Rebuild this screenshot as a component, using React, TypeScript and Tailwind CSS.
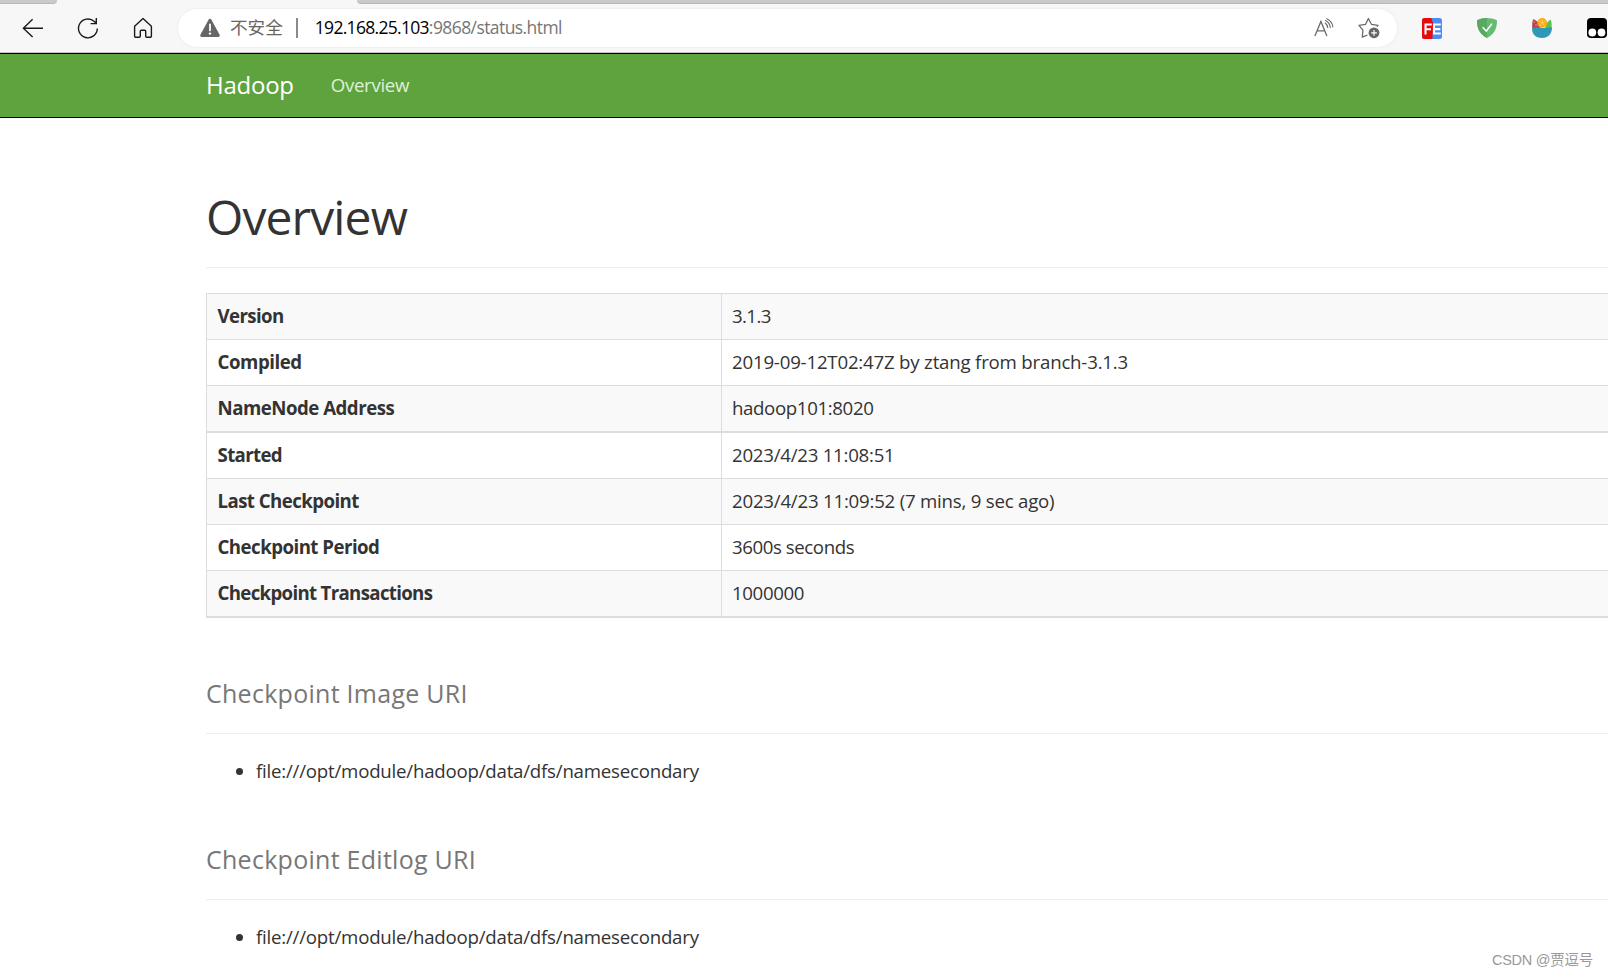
interface Row {
  label: string;
  value: string;
  labelClass: string;
  valueClass: string;
}

const rows: Row[] = [
  { label: 'Version', value: '3.1.3', labelClass: 'tracking-[-0.6px]', valueClass: 'tracking-[-0.6px]' },
  { label: 'Compiled', value: '2019-09-12T02:47Z by ztang from branch-3.1.3', labelClass: 'tracking-[-0.45px]', valueClass: 'tracking-[-0.2px]' },
  { label: 'NameNode Address', value: 'hadoop101:8020', labelClass: 'tracking-[-0.5px]', valueClass: 'tracking-[-0.37px]' },
  { label: 'Started', value: '2023/4/23 11:08:51', labelClass: 'tracking-[-0.65px]', valueClass: 'tracking-[-0.25px]' },
  { label: 'Last Checkpoint', value: '2023/4/23 11:09:52 (7 mins, 9 sec ago)', labelClass: 'tracking-[-0.57px]', valueClass: 'tracking-[-0.22px]' },
  { label: 'Checkpoint Period', value: '3600s seconds', labelClass: 'tracking-[-0.53px]', valueClass: 'tracking-[-0.43px]' },
  { label: 'Checkpoint Transactions', value: '1000000', labelClass: 'tracking-[-0.68px]', valueClass: 'tracking-[-0.37px]' },
];

function BackIcon() {
  return (
    <svg width="22" height="22" viewBox="0 0 22 22" fill="none" stroke="#1b1b1b" strokeWidth="1.4">
      <path d="M21 11.3H1.4M10.6 2.2 1.4 11.3l9.2 8.8" />
    </svg>
  );
}

function ReloadIcon() {
  return (
    <svg width="22" height="22" viewBox="0 0 22 22" fill="none" stroke="#1b1b1b" strokeWidth="1.4">
      <path d="M20.3 11.5A9.4 9.4 0 1 1 17.4 4.6L19.3 6.4M19.3 1V6.6H13.6" />
    </svg>
  );
}

function HomeIcon() {
  return (
    <svg width="22" height="22" viewBox="0 0 22 22" fill="none" stroke="#1b1b1b" strokeWidth="1.4" strokeLinejoin="round">
      <path d="M2.6 9.2 11 1.6l8.4 7.6v9.9a1.2 1.2 0 0 1-1.2 1.2h-3.500a1 1 0 0 1-1-1v-5.100a1 1 0 0 0-1-1H9.300a1 1 0 0 0-1 1v5.100a1 1 0 0 1-1 1H3.800a1.200 1.200 0 0 1-1.200-1.200z" />
    </svg>
  );
}

function WarningIcon() {
  return (
    <svg width="22" height="20" viewBox="0 0 22 20">
      <path d="M9.7 1.4a1.5 1.5 0 0 1 2.600 0l8.300 15.300a1.500 1.500 0 0 1-1.300 2.200H2.700a1.500 1.500 0 0 1-1.300-2.200z" fill="#666" />
      <path d="M11 6.4v6" stroke="#fff" strokeWidth="1.8" strokeLinecap="round" />
      <circle cx="11" cy="15.6" r="1.2" fill="#fff" />
    </svg>
  );
}

function ReadAloudIcon() {
  return (
    <svg width="20" height="20" viewBox="0 0 20 20" fill="none" stroke="#6a6a6a" strokeWidth="1.3">
      <path d="M.9 18 6.9 3.500 12.900 18M3 12.800h7.800" />
      <path d="M10.900 4.700Q13.600 6.600 13.800 10M11.200 2.300Q15.900 4.700 16.400 10M12.500.6Q18.300 3.500 19 9.400" strokeWidth="1.1" />
    </svg>
  );
}

function FavoriteIcon() {
  return (
    <svg width="22" height="22" viewBox="0 0 22 22" fill="none" stroke="#6a6a6a" strokeWidth="1.3" strokeLinejoin="round">
      <path d="M9.500 18 4.300 20.200 4.900 13.200 1 8.300 7.600 7.300 10.400 1.500 13.400 7.300 20 8.300 18.800 9.600" />
      <circle cx="16" cy="15.8" r="5.4" fill="#666" stroke="none" />
      <path d="M16 12.900v5.800M13.100 15.800h5.800" stroke="#fff" strokeWidth="1.2" />
    </svg>
  );
}

function FeIcon() {
  return (
    <svg width="20" height="21" viewBox="0 0 20 21">
      <rect width="20" height="21" rx="2.5" fill="#4a8df6" />
      <path d="M2.500 0H9.300L11.300 6 10.300 21H2.500A2.500 2.500 0 0 1 0 18.500v-16A2.500 2.500 0 0 1 2.500 0z" fill="#ea0a0a" />
      <path d="M3.500 16.500V6.500H9.800M3.500 11.300H9M18.800 6.500H12V15.500H18.800M12 11.100H18.300" fill="none" stroke="#fff" strokeWidth="2.1" />
    </svg>
  );
}

function ShieldIcon() {
  return (
    <svg width="20" height="20" viewBox="0 0 20 20">
      <path d="M10 0C7 0 3 .8 0 2.200 0 9 1.500 15.500 10 20 18.500 15.500 20 9 20 2.200 17 .8 13 0 10 0z" fill="#68bc71" />
      <path d="M10 0C7 0 3 .8 0 2.200 0 9 1.500 15.500 10 20z" fill="#5aa862" />
      <path d="M5.600 9.300 9.300 13 15 5.600" fill="none" stroke="#fff" strokeWidth="1.5" />
    </svg>
  );
}

function SaladIcon() {
  return (
    <svg width="20" height="20" viewBox="0 0 20 20">
      <path d="M.3 10.500C0 6 .2 3 1.300 1.300 4 2 8 5 8.500 10.500z" fill="#b8444b" />
      <path d="M19.600 10.500c.3-4 0-7-1-9C16 3 13.500 6 13.500 10.500z" fill="#5cc24e" />
      <circle cx="10.200" cy="4.900" r="4.900" fill="#f9a91c" />
      <path d="M10.200 4.900V1.200M10.200 4.900 13.600 3.400M10.200 4.900 7 3.400M10.200 4.900 13 8M10.200 4.900 7.700 8" stroke="#fdd35c" strokeWidth=".9" />
      <circle cx="2.200" cy="4" r=".7" fill="#f0a0a0" />
      <circle cx="4" cy="7" r=".8" fill="#f0a0a0" />
      <path d="M0 10.200C4 9 6 9.200 7.500 9.700 11 10.600 14 9 20 9.600 20 16 16.500 20 10 20S0 16 0 10.200z" fill="#2f97b7" />
    </svg>
  );
}

function TampermonkeyIcon() {
  return (
    <svg width="20" height="20" viewBox="0 0 20 20">
      <rect width="20" height="20" rx="4" fill="#000" />
      <circle cx="5.3" cy="14.500" r="3.9" fill="#fff" />
      <circle cx="14.500" cy="14.500" r="3.9" fill="#fff" />
    </svg>
  );
}

function BrowserBar() {
  return (
    <div className="h-[53px] shrink-0 bg-[#f7f7f7] border-b border-[#c4c4c4]">
      {/* bottom edge of the tab strip, the gap is the active tab */}
      <div className="flex h-1 justify-between">
        <div className="w-[57px] rounded-br-md border-b border-[#b8b8b8] bg-[#cacaca]" />
        <div className="w-[1251px] rounded-bl-md border-b border-[#b8b8b8] bg-[#cacaca]" />
      </div>
      <div className="flex h-[48px] items-center">
        <div className="flex w-[178px] shrink-0 gap-[33px] pl-[22px]">
          <BackIcon />
          <ReloadIcon />
          <HomeIcon />
        </div>
        <div className="flex h-[38px] w-[1219px] shrink-0 items-center rounded-full bg-white pl-[21px] pr-[17px] shadow-[0_0_3px_rgba(0,0,0,0.08)]">
          <WarningIcon />
          <span className="ml-[9px] pb-[2px] font-['Noto_Sans_CJK_SC',sans-serif] text-[17.6px] leading-none text-[#666]">不安全</span>
          <span className="ml-[13px] h-5 w-[2px] bg-[#8a8a8a]" />
          <span className="ml-[17px] pb-[1px] text-[17.5px] leading-none tracking-[-0.58px] text-[#767676]">
            <span className="tracking-[-0.7px] text-black">192.168.25.103</span>:9868/status.html
          </span>
          <span className="ml-auto flex items-center gap-[24px] pb-px">
            <ReadAloudIcon />
            <FavoriteIcon />
          </span>
        </div>
        <div className="flex shrink-0 items-center gap-[35px] pl-[25px]">
          <FeIcon />
          <ShieldIcon />
          <SaladIcon />
          <TampermonkeyIcon />
        </div>
      </div>
    </div>
  );
}

function Section({ title, children }: { title: string; children: string }) {
  return (
    <section className="h-[166px]">
      <h2 className="h-[60px] border-b border-[#eee] text-[25px] leading-[38px] tracking-[0.27px] text-[#777]">{title}</h2>
      <ul className="mt-[23px] list-disc pl-[50px]">
        <li className="text-[18.67px] leading-[27px] tracking-[-0.22px]">{children}</li>
      </ul>
    </section>
  );
}

export default function App() {
  return (
    <div className="relative flex h-[977px] w-[1608px] flex-col overflow-hidden bg-white font-['Open_Sans','Noto_Sans_CJK_SC',sans-serif] text-[#333]">
      <BrowserBar />

      <nav className="flex h-[65px] shrink-0 items-center border-y border-black bg-[#5fa33e] pb-[2px] pl-[206px]">
        <span className="text-[24px] tracking-[-0.25px] text-white">Hadoop</span>
        <span className="ml-[37px] text-[18.67px] tracking-[-0.33px] text-[#dff0d8]">Overview</span>
      </nav>

      <main className="pl-[206px]">
        <h1 className="mt-[71px] h-[79px] border-b border-[#eee] text-[48px] leading-[56px] tracking-[-0.9px]">Overview</h1>

        <table className="mt-[25px] w-full table-fixed border-separate border-spacing-0 border-b-2 border-l border-[#ddd] text-[18.67px]">
          <tbody>
            {rows.map((row, i) => (
              <tr key={row.label} className={`${i === 3 ? 'h-[47px]' : 'h-[46px]'} ${i % 2 === 0 ? 'bg-[#f9f9f9]' : 'bg-white'}`}>
                <th className={`w-[514px] border-[#ddd] p-0 pb-[2px] pl-[10.5px] text-left font-bold leading-[27px] ${i === 3 ? 'border-t-2' : 'border-t'} ${row.labelClass}`}>
                  {row.label}
                </th>
                <td className={`border-l border-[#ddd] p-0 pb-[2px] pl-[10px] leading-[27px] ${i === 3 ? 'border-t-2' : 'border-t'} ${row.valueClass}`}>
                  {row.value}
                </td>
              </tr>
            ))}
          </tbody>
        </table>

        <div className="mt-[56px]">
          <Section title="Checkpoint Image URI">file:///opt/module/hadoop/data/dfs/namesecondary</Section>
          <Section title="Checkpoint Editlog URI">file:///opt/module/hadoop/data/dfs/namesecondary</Section>
        </div>
      </main>

      {/* watermark over the page */}
      <div className="absolute bottom-[5px] right-[15px] font-['Liberation_Sans','Noto_Sans_CJK_SC',sans-serif] text-[14.5px] tracking-[-0.25px] text-[#999]">
        CSDN @贾逗号
      </div>
    </div>
  );
}
